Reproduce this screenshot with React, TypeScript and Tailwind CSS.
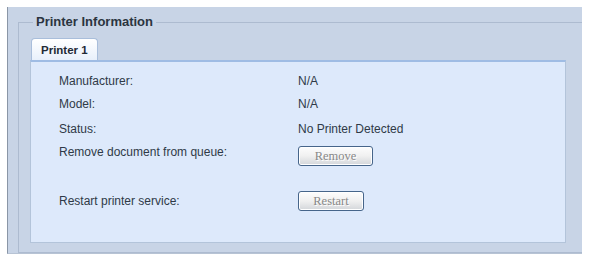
const rows = [
  { label: "Manufacturer:", value: "N/A", h: "h-[23px]" },
  { label: "Model:", value: "N/A", h: "h-[25px]" },
  { label: "Status:", value: "No Printer Detected", h: "h-[23px]" },
];

function GrayButton({ label, width }: { label: string; width: string }) {
  return (
    <button
      disabled
      className={`${width} h-[20px] rounded-[3px] border border-[#46658a] bg-gradient-to-b from-[#fdfdfd] via-[#f0f0f0] to-[#d3d6da] text-[12.5px] leading-none text-[#888888] [text-shadow:1px_1px_0_#ffffff] font-['Liberation_Serif',serif] shadow-[inset_0_0_0_1px_#ffffff]`}
    >
      {label}
    </button>
  );
}

export default function App() {
  return (
    <div className="w-[589px] h-[262px] bg-white pl-[7px] pt-[7px] font-['Liberation_Sans',Arial,sans-serif]">
      {/* outer panel */}
      <div className="w-[575px] h-[247px] bg-[#c8d4e6] border-l border-l-[#8a96a6] border-b border-b-[#b7c3d4] pl-[10px] pt-[7px]">
        <fieldset className="border-t border-l border-b border-r-0 border-[#adbbd0] pb-[9px]">
          <legend className="ml-[14px] px-[3px] text-[13px] leading-[16px] font-bold text-[#2b3440]">
            Printer Information
          </legend>

          <div className="ml-[11px] mr-[16px] mt-[8px]">
            {/* tab */}
            <div className="flex">
              <div className="ml-[1px] w-[67px] h-[22px] rounded-t-[4px] border border-b-0 border-[#a9bedb] bg-gradient-to-b from-[#ffffff] to-[#e8f0fb] pl-[9px] pt-[4px] text-[11.5px] leading-[14px] font-bold text-[#1f2a36]">
                Printer 1
              </div>
            </div>

            {/* tab content */}
            <div className="border-t-2 border-t-[#9fbce4] border-x border-b border-x-[#b3c4da] border-b-[#b3c4da] bg-[#dde9fb] pl-[28px] pt-[11px] pb-[31px] text-[12px] leading-[16px] text-[#2f3a47]">
              {rows.map((r) => (
                <div key={r.label} className={`flex ${r.h}`}>
                  <div className="w-[239px]">{r.label}</div>
                  <div>{r.value}</div>
                </div>
              ))}

              <div className="flex h-[47px]">
                <div className="w-[239px]">Remove document from queue:</div>
                <div className="pt-[2px]">
                  <GrayButton label="Remove" width="w-[75px]" />
                </div>
              </div>

              <div className="flex items-center h-[20px]">
                <div className="w-[239px]">Restart printer service:</div>
                <GrayButton label="Restart" width="w-[66px]" />
              </div>
            </div>
          </div>
        </fieldset>
      </div>
    </div>
  );
}
